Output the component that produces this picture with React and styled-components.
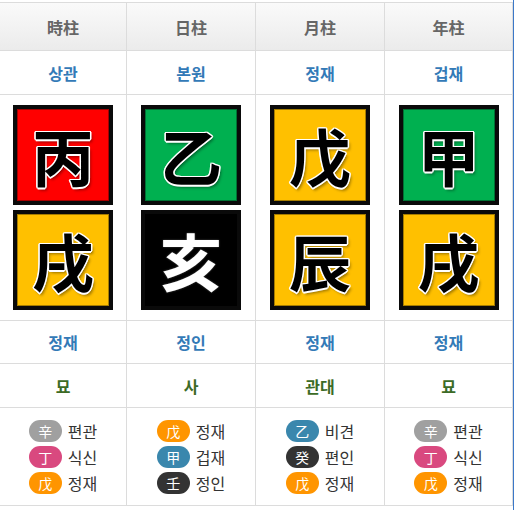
import React from 'react'
import styled, { createGlobalStyle } from 'styled-components'

const GlobalStyle = createGlobalStyle`
    body {
        margin: 0;
        background: #fff;
        font-family: "Noto Sans CJK KR", "Noto Sans", sans-serif;
    }
`

const pillars = [
    {
        title: '時柱', sipsin: '상관', stem: { ch: '丙', bg: '#ff0000' }, branch: { ch: '戌', bg: '#ffc000' },
        branchSipsin: '정재', stage: '묘',
        hidden: [['辛', '#a0a0a0', '편관'], ['丁', '#d9497f', '식신'], ['戊', '#ff9500', '정재']],
    },
    {
        title: '日柱', sipsin: '본원', stem: { ch: '乙', bg: '#00b050' }, branch: { ch: '亥', bg: '#000', dark: true },
        branchSipsin: '정인', stage: '사',
        hidden: [['戊', '#ff9500', '정재'], ['甲', '#3a87ad', '겁재'], ['壬', '#333333', '정인']],
    },
    {
        title: '月柱', sipsin: '정재', stem: { ch: '戊', bg: '#ffc000' }, branch: { ch: '辰', bg: '#ffc000' },
        branchSipsin: '정재', stage: '관대',
        hidden: [['乙', '#3a87ad', '비견'], ['癸', '#333333', '편인'], ['戊', '#ff9500', '정재']],
    },
    {
        title: '年柱', sipsin: '겁재', stem: { ch: '甲', bg: '#00b050' }, branch: { ch: '戌', bg: '#ffc000' },
        branchSipsin: '정재', stage: '묘',
        hidden: [['辛', '#a0a0a0', '편관'], ['丁', '#d9497f', '식신'], ['戊', '#ff9500', '정재']],
    },
]

export default function App() {
    return (
        <Frame>
            <GlobalStyle />
            <Table>
                {pillars.map(p => <HeadCell key={p.title}>{p.title}</HeadCell>)}
                {pillars.map(p => <Cell key={p.title} $h={43} $color="#337ab7" $bold>{p.sipsin}</Cell>)}
                {pillars.map(p => (
                    <CharCell key={p.title}>
                        <CharBox $bg={p.stem.bg} $dark={p.stem.dark}>{p.stem.ch}</CharBox>
                        <CharBox $bg={p.branch.bg} $dark={p.branch.dark}>{p.branch.ch}</CharBox>
                    </CharCell>
                ))}
                {pillars.map(p => <Cell key={p.title} $h={42} $color="#337ab7" $bold>{p.branchSipsin}</Cell>)}
                {pillars.map(p => <Cell key={p.title} $h={43} $color="#3c6b26" $bold>{p.stage}</Cell>)}
                {pillars.map(p => (
                    <Cell key={p.title} $h={97}>
                        <HiddenList>
                            {p.hidden.map(([ch, color, label], i) => (
                                <HiddenRow key={i}>
                                    <Badge $color={color}>{ch}</Badge>
                                    <span>{label}</span>
                                </HiddenRow>
                            ))}
                        </HiddenList>
                    </Cell>
                ))}
            </Table>
        </Frame>
    )
}

const Frame = styled.div`
    width: 514px;
    min-height: 510px;
    box-sizing: border-box;
    border-right: 1px solid #3b78c8;
    padding-top: 2px;
`

const Table = styled.div`
    width: 513px;
    display: grid;
    grid-template-columns: 127px 129px 129px 128px;
    border-top: 1px solid #dcdcdc;
`

const Cell = styled.div`
    height: ${props => props.$h}px;
    border-right: 1px solid #dcdcdc;
    border-bottom: 1px solid #dcdcdc;
    display: flex;
    align-items: center;
    justify-content: center;
    font-size: 16px;
    font-weight: ${props => props.$bold ? 700 : 400};
    color: ${props => props.$color || '#333'};
`

const HeadCell = styled(Cell)`
    height: 47px;
    background: linear-gradient(to bottom, #fafafa, #ebebeb);
    color: #666;
    font-weight: 700;
    font-size: 16px;
`

const CharCell = styled.div`
    height: 205px;
    padding: 10px 0;
    border-right: 1px solid #dcdcdc;
    border-bottom: 1px solid #dcdcdc;
    display: flex;
    flex-direction: column;
    align-items: center;
    gap: 5px;
`

const CharBox = styled.div`
    width: 100px;
    height: 100px;
    box-sizing: border-box;
    border: 4px solid #0a0a0a;
    box-shadow: inset 0 0 0 1px rgba(0, 0, 0, 0.35);
    background: ${props => props.$bg};
    display: flex;
    align-items: center;
    justify-content: center;
    font-family: "Noto Sans CJK KR", "Noto Sans CJK SC", sans-serif;
    font-size: 62px;
    font-weight: 700;
    line-height: 1;
    color: ${props => props.$dark ? '#fff' : '#000'};
    text-shadow: ${props => props.$dark
        ? '0 0 2px #555'
        : '1.5px 0 0 #fff, -1.5px 0 0 #fff, 0 1.5px 0 #fff, 0 -1.5px 0 #fff, 1px 1px 0 #fff, -1px 1px 0 #fff, 1px -1px 0 #fff, -1px -1px 0 #fff, 2px 3px 3px rgba(0,0,0,0.4)'};
`

const HiddenList = styled.div`
    display: flex;
    flex-direction: column;
    gap: 4px;
`

const HiddenRow = styled.div`
    display: flex;
    align-items: center;
    gap: 6px;
    height: 22px;
    font-size: 16px;
    color: #333;
`

const Badge = styled.span`
    flex-shrink: 0;
    width: 33px;
    height: 22px;
    border-radius: 11px;
    background: ${props => props.$color};
    color: #fff;
    font-size: 14px;
    display: flex;
    align-items: center;
    justify-content: center;
`
